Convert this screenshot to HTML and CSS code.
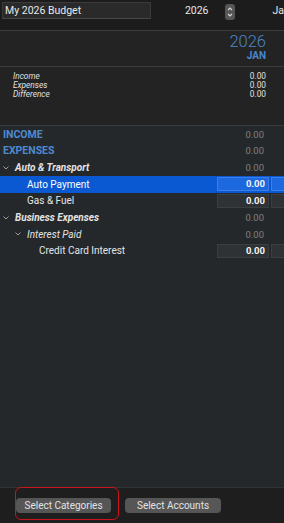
FILE: index.html
```html
<!DOCTYPE html>
<html>
<head>
<meta charset="utf-8">
<link rel="stylesheet" href="styles.css">
</head>
<body>
<div class="app">
  <div class="topbar">
    <div class="name-field">My 2026 Budget</div>
    <div class="year">2026</div>
    <div class="stepper">
      <svg width="10" height="16" viewBox="0 0 10 16"><path d="M3 6 L5 4 L7 6" fill="none" stroke="#d8d8d8" stroke-width="1.1"/><path d="M3 10 L5 12 L7 10" fill="none" stroke="#d8d8d8" stroke-width="1.1"/></svg>
    </div>
    <div class="month">Ja</div>
  </div>
  <div class="header">
    <div class="h-year">2026</div>
    <div class="h-month">JAN</div>
  </div>
  <div class="summary">
    <div class="sum-row"><span>Income</span><span class="sv">0.00</span></div>
    <div class="sum-row"><span>Expenses</span><span class="sv">0.00</span></div>
    <div class="sum-row"><span>Difference</span><span class="sv">0.00</span></div>
  </div>
  <div class="list">
    <div class="row"><span class="label section">INCOME</span><span class="val">0.00</span></div>
    <div class="row"><span class="label section">EXPENSES</span><span class="val">0.00</span></div>
    <div class="row"><span class="chev"><svg width="6" height="4" viewBox="0 0 6 4"><path d="M0.5 0.5 L3 3 L5.5 0.5" fill="none" stroke="#9b9da0" stroke-width="1"/></svg></span><span class="label group">Auto &amp; Transport</span><span class="val">0.00</span></div>
    <div class="row selected"><span class="label l2">Auto Payment</span><span class="box">0.00</span><span class="box2"></span></div>
    <div class="row"><span class="label l2">Gas &amp; Fuel</span><span class="box">0.00</span><span class="box2"></span></div>
    <div class="row"><span class="chev"><svg width="6" height="4" viewBox="0 0 6 4"><path d="M0.5 0.5 L3 3 L5.5 0.5" fill="none" stroke="#9b9da0" stroke-width="1"/></svg></span><span class="label group">Business Expenses</span><span class="val">0.00</span></div>
    <div class="row"><span class="chev c2"><svg width="6" height="4" viewBox="0 0 6 4"><path d="M0.5 0.5 L3 3 L5.5 0.5" fill="none" stroke="#9b9da0" stroke-width="1"/></svg></span><span class="label sub">Interest Paid</span><span class="val">0.00</span></div>
    <div class="row"><span class="label l3">Credit Card Interest</span><span class="box">0.00</span><span class="box2"></span></div>
  </div>
  <div class="footer">
    <div class="btn b1">Select Categories</div>
    <div class="btn b2">Select Accounts</div>
    <div class="highlight"></div>
  </div>
</div>
</body>
</html>
```
FILE: styles.css
```css
html, body {
  margin: 0;
  padding: 0;
  background: #25282b;
}
body {
  font-family: "Roboto", "Liberation Sans", sans-serif;
  color: #e6e6e6;
}
.app {
  width: 284px;
  height: 523px;
  display: flex;
  flex-direction: column;
  overflow: hidden;
}
.topbar {
  height: 30px;
  flex: none;
  background: #1c1c1c;
  border-bottom: 1px solid #3a3a3a;
  display: flex;
  align-items: flex-start;
}
.name-field {
  margin: 2px 0 0 2px;
  width: 147px;
  height: 15px;
  background: #2a2a2a;
  border: 1px solid #3b3b3b;
  border-bottom-color: #474747;
  font-size: 10.5px;
  line-height: 15px;
  padding-left: 2px;
  color: #e8e8e8;
  white-space: nowrap;
}
.year {
  margin: 4px 0 0 34px;
  font-size: 10.5px;
  line-height: 14px;
  color: #e8e8e8;
}
.stepper {
  margin: 4px 0 0 17px;
  width: 10px;
  height: 16px;
  background: #565656;
  border-radius: 3px;
  display: flex;
}
.month {
  margin: 4px 0 0 37px;
  font-size: 10.5px;
  line-height: 14px;
  color: #e8e8e8;
  white-space: nowrap;
}
.header {
  height: 35px;
  flex: none;
  background: #232323;
  border-bottom: 1px solid #3a3a3a;
  display: flex;
  flex-direction: column;
  align-items: flex-end;
  padding-right: 18px;
}
.h-year {
  font-size: 16.5px;
  font-weight: 300;
  color: #4c87c7;
  line-height: 18px;
  margin-top: 2px;
}
.h-month {
  font-size: 10px;
  font-weight: 700;
  color: #4a87cc;
  line-height: 10px;
}
.summary {
  height: 59px;
  flex: none;
  box-sizing: border-box;
  background: #232323;
  border-bottom: 1px solid #3a3a3a;
  padding: 5px 18px 0 13px;
}
.sum-row {
  display: flex;
  justify-content: space-between;
  font-size: 8.3px;
  line-height: 9px;
  font-style: italic;
  color: #e0e0e0;
}
.sum-row .sv {
  font-style: normal;
}
.list {
  flex: 1;
  background: #25282b;
}
.row {
  height: 16.67px;
  display: flex;
  align-items: center;
  font-size: 10px;
}
.row.selected {
  background: #0a58d2;
}
.label {
  color: #e4e4e4;
  white-space: nowrap;
}
.section {
  margin-left: 3px;
  font-weight: 700;
  color: #4d8ad2;
  font-size: 10.5px;
}
.group {
  font-weight: 700;
  font-style: italic;
  margin-left: 6px;
}
.sub {
  font-style: italic;
  margin-left: 6px;
}
.l2 { margin-left: 27px; }
.l3 { margin-left: 39px; }
.chev {
  width: 6px;
  height: 4px;
  margin-left: 3px;
  display: flex;
  flex: none;
}
.chev.c2 { margin-left: 15px; }
.val {
  margin-left: auto;
  margin-right: 20px;
  color: #7d7f82;
  font-size: 9.5px;
}
.box {
  margin-left: auto;
  width: 52px;
  height: 14px;
  box-sizing: border-box;
  background: #2f3234;
  border: 1px solid #3c3f42;
  font-size: 9.5px;
  line-height: 12px;
  text-align: right;
  padding-right: 3px;
  font-weight: 700;
  color: #f2f2f2;
}
.box2 {
  margin-left: 2px;
  width: 20px;
  height: 14px;
  box-sizing: border-box;
  background: #2f3234;
  border: 1px solid #3c3f42;
  margin-right: -7px;
  flex: none;
}
.selected .box, .selected .box2 {
  background: #1c68df;
  border-color: #3a7ee6;
}
.selected .label { color: #ffffff; }
.footer {
  height: 35px;
  flex: none;
  background: #1e1e1e;
  border-top: 1px solid #333;
  display: flex;
  align-items: center;
  padding-left: 16px;
  gap: 14px;
  position: relative;
}
.btn {
  height: 15px;
  background: #565656;
  border-radius: 4px;
  font-size: 10px;
  line-height: 15px;
  color: #e2e2e2;
  text-align: center;
  white-space: nowrap;
}
.b1 { width: 95px; }
.b2 { width: 96px; }
.highlight {
  position: absolute;
  left: 15px;
  top: -1px;
  width: 102px;
  height: 31px;
  border: 1px solid #c8161d;
  border-radius: 6px;
}
```
